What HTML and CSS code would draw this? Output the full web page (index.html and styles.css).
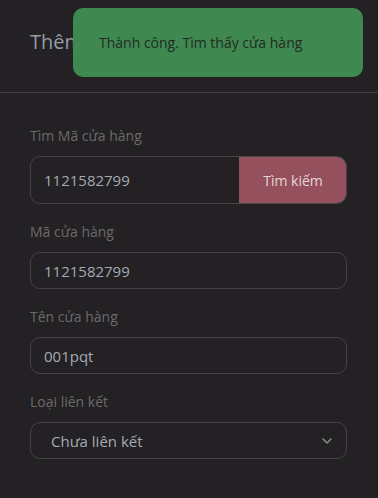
FILE: index.html
```html
<!DOCTYPE html>
<html lang="vi">
<head>
<meta charset="utf-8">
<title>Thêm cửa hàng</title>
<link rel="stylesheet" href="styles.css">
</head>
<body>
<header class="header">
  <h1 class="title">Thêm cửa hàng</h1>
</header>
<form class="form">
  <div class="field">
    <label class="label">Tìm Mã cửa hàng</label>
    <div class="search-group">
      <input class="search-input" type="text" value="1121582799">
      <button class="search-btn" type="button">Tìm kiếm</button>
    </div>
  </div>
  <div class="field">
    <label class="label">Mã cửa hàng</label>
    <input class="input" type="text" value="1121582799">
  </div>
  <div class="field">
    <label class="label">Tên cửa hàng</label>
    <input class="input" type="text" value="001pqt">
  </div>
  <div class="field">
    <label class="label">Loại liên kết</label>
    <div class="select">
      <span class="select-text">Chưa liên kết</span>
      <svg class="chevron" width="10" height="6" viewBox="0 0 10 6"><path d="M1 1l4 4 4-4" fill="none" stroke="#8a8a8a" stroke-width="1.6" stroke-linecap="round" stroke-linejoin="round"/></svg>
    </div>
  </div>
</form>
<div class="toast">Thành công. Tìm thấy cửa hàng</div>
</body>
</html>
```
FILE: styles.css
```css
* { box-sizing: border-box; }
html, body {
  margin: 0;
  padding: 0;
  background: #232123;
  font-family: "Open Sans", "Noto Sans", sans-serif;
}
.header {
  height: 93px;
  padding: 0 30px;
  border-bottom: 1px solid #3e3c3e;
  display: flex;
  align-items: center;
}
.title {
  margin: 0;
  margin-top: -10px;
  font-size: 20px;
  font-weight: 400;
  color: #949ca7;
}
.form {
  padding: 33px 31px 0 30px;
  display: flex;
  flex-direction: column;
  gap: 18px;
}
.field {
  display: flex;
  flex-direction: column;
  gap: 10px;
}
.label {
  font-size: 14px;
  line-height: 20px;
  color: #6c6a6c;
}
.search-group {
  display: flex;
  height: 48px;
  border: 1px solid #454345;
  border-radius: 10px;
  overflow: hidden;
}
.search-input {
  flex: 1;
  min-width: 0;
  background: transparent;
  border: none;
  outline: none;
  padding: 0 13px;
  font-family: inherit;
  font-size: 15px;
  color: #a3aab3;
}
.search-btn {
  width: 108px;
  border: none;
  margin: -1px -1px -1px 0;
  background: #94505c;
  color: #e6d6da;
  font-family: inherit;
  font-size: 14px;
}
.input {
  height: 37px;
  background: transparent;
  border: 1px solid #454345;
  border-radius: 10px;
  padding: 0 13px;
  font-family: inherit;
  font-size: 15px;
  color: #a3aab3;
  outline: none;
}
.select {
  height: 37px;
  border: 1px solid #454345;
  border-radius: 10px;
  padding: 0 14px 0 20px;
  display: flex;
  align-items: center;
  justify-content: space-between;
}
.select-text {
  font-size: 15px;
  color: #a3aab3;
}
.toast {
  position: absolute;
  left: 73px;
  top: 8px;
  width: 290px;
  height: 69px;
  background: #3f8950;
  border-radius: 10px;
  padding: 0 26px;
  display: flex;
  align-items: center;
  font-size: 14px;
  color: #232a25;
}
```
